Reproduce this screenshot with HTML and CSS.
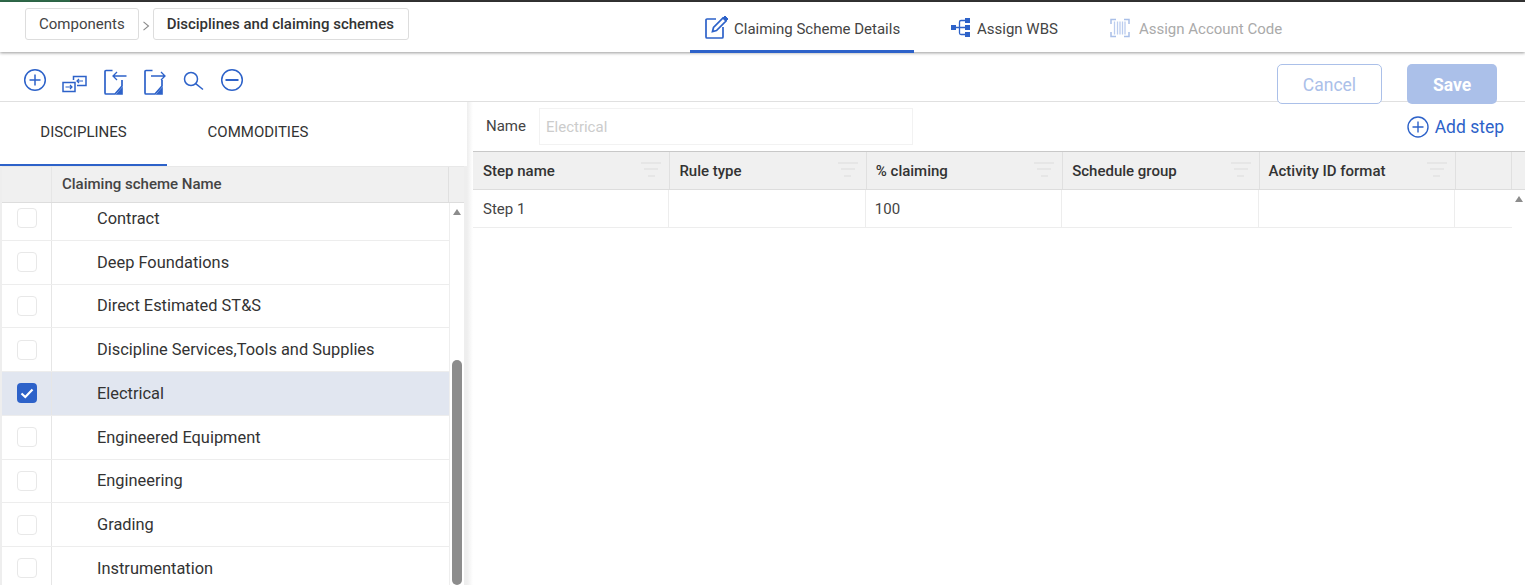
FILE: index.html
```html
<!DOCTYPE html>
<html lang="en">
<head>
    <meta charset="UTF-8">
    <meta name="viewport" content="width=device-width, initial-scale=1.0">
    <title>Disciplines and claiming schemes</title>
    <link rel="stylesheet" href="styles.css">
</head>
<body>
    <div class="top-strip">
        <div class="strip-green"></div>
        <div class="strip-dark"></div>
    </div>

    <header class="header">
        <nav class="breadcrumb">
            <span class="crumb">Components</span>
            <span class="crumb-sep">
                <svg width="8" height="10" viewBox="0 0 8 10"><path d="M1.5 .8 6.500 5 1.500 9.200" fill="none" stroke="#8a8a8a" stroke-width="1.100"/></svg>
            </span>
            <span class="crumb crumb-current">Disciplines and claiming schemes</span>
        </nav>
        <div class="page-tabs">
            <div class="page-tab active">
                <svg class="tab-icon icon-edit" width="24" height="24" viewBox="0 0 24 24" fill="none" stroke="#2d62c9" stroke-width="1.700">
                    <path d="M12 4H3a1 1 0 0 0-1 1v17a1 1 0 0 0 1 1h15a1 1 0 0 0 1-1V12"/>
                    <path d="M8.500 16.500 9.500 12.500 19 3l3 3-9.500 9.500z"/>
                    <path d="M19 3l2-2 3 3-2 2z" fill="#2d62c9" stroke-width="1"/>
                </svg>
                <span>Claiming Scheme Details</span>
            </div>
            <div class="page-tab">
                <svg class="tab-icon icon-wbs" width="20" height="20" viewBox="0 0 20 20" fill="#2d62c9">
                    <rect x="1" y="8" width="5" height="5"/>
                    <rect x="15" y="1" width="5" height="5"/>
                    <rect x="15" y="8" width="5" height="5"/>
                    <rect x="15" y="15" width="5" height="5"/>
                    <path d="M6 10.500h9M15 3.500h-4a1.500 1.500 0 0 0-1.500 1.500v11a1.500 1.500 0 0 0 1.500 1.500h4" fill="none" stroke="#2d62c9" stroke-width="1.300"/>
                </svg>
                <span>Assign WBS</span>
            </div>
            <div class="page-tab disabled">
                <svg class="tab-icon icon-code" width="20" height="20" viewBox="0 0 20 20" fill="none" stroke="#a9bfe8" stroke-width="1.500">
                    <path d="M1 6V1.500H6M14 1.500H19V6M1 14V18.500H6M14 18.500H19V14"/>
                    <path d="M4.500 3.500v13M7.500 3.500v13M10 3.500v13M12.500 3.500v13M15 3.500v13" stroke="#bccdee" stroke-width="1.300"/>
                </svg>
                <span>Assign Account Code</span>
            </div>
        </div>
    </header>

    <div class="toolbar">
        <div class="tool-icons">
            <svg width="24" height="24" viewBox="0 0 24 24" fill="none" stroke="#2d62c9" stroke-width="1.500">
                <circle cx="12" cy="12" r="10.300"/>
                <path d="M12 6.500v11M6.500 12h11"/>
            </svg>
            <svg class="tool-swap" width="26" height="24" viewBox="0 0 26 24" fill="none" stroke="#2d62c9" stroke-width="1.500">
                <rect x="2" y="12.500" width="12" height="9"/>
                <path d="M12.500 10V6.500H25V15.500H16"/>
                <path d="M4.500 17H11M9 15l2 2-2 2M22 11H16M18 9l-2 2 2 2" stroke-width="1.200"/>
            </svg>
            <svg class="tool-doc" width="24" height="26" viewBox="0 0 24 26" fill="none" stroke="#2d62c9" stroke-width="1.700">
                <path d="M9.500 1.500H3a1 1 0 0 0-1 1V24a1 1 0 0 0 1 1h9l7-8V11"/>
                <path d="M19.800 17.500V25.800H12.500z" fill="#2d62c9" stroke="none"/>
                <path d="M23.500 7H10M14 3 10 7l4 4" stroke-width="1.300"/>
            </svg>
            <svg class="tool-doc" width="24" height="26" viewBox="0 0 24 26" fill="none" stroke="#2d62c9" stroke-width="1.700">
                <path d="M9.500 1.500H3a1 1 0 0 0-1 1V24a1 1 0 0 0 1 1h9l7-8V11"/>
                <path d="M19.800 17.500V25.800H12.500z" fill="#2d62c9" stroke="none"/>
                <path d="M8 7H22M18 3l4 4-4 4" stroke-width="1.300"/>
            </svg>
            <svg class="tool-search" width="22" height="22" viewBox="0 0 22 22" fill="none" stroke="#2d62c9" stroke-width="1.500">
                <circle cx="8" cy="9" r="6.500"/>
                <path d="M12.700 13.700 20 19.500"/>
            </svg>
            <svg class="tool-minus" width="24" height="24" viewBox="0 0 24 24" fill="none" stroke="#2d62c9" stroke-width="1.500">
                <circle cx="12" cy="12" r="10.300"/>
                <path d="M5.500 12h13" stroke-width="2"/>
            </svg>
        </div>
        <div class="actions">
            <button class="btn btn-cancel">Cancel</button>
            <button class="btn btn-save">Save</button>
        </div>
    </div>

    <main class="content">
        <section class="left-panel">
            <div class="side-tabs">
                <div class="side-tab active">DISCIPLINES</div>
                <div class="side-tab">COMMODITIES</div>
            </div>
            <div class="scheme-grid">
                <div class="scheme-head">
                    <div class="cell-check"></div>
                    <div class="cell-name">Claiming scheme Name</div>
                    <div class="cell-end"></div>
                </div>
                <div class="scheme-body">
                    <div class="scheme-rows">
                        <div class="scheme-row"><div class="cell-check"><span class="check"></span></div><div class="cell-name">Contract</div></div>
                        <div class="scheme-row"><div class="cell-check"><span class="check"></span></div><div class="cell-name">Deep Foundations</div></div>
                        <div class="scheme-row"><div class="cell-check"><span class="check"></span></div><div class="cell-name">Direct Estimated ST&amp;S</div></div>
                        <div class="scheme-row"><div class="cell-check"><span class="check"></span></div><div class="cell-name">Discipline Services,Tools and Supplies</div></div>
                        <div class="scheme-row selected">
                            <div class="cell-check">
                                <span class="check checked">
                                    <svg width="20" height="20" viewBox="0 0 20 20"><path d="M4.500 10.500 8.300 14 15.500 6.500" fill="none" stroke="#fff" stroke-width="2.200"/></svg>
                                </span>
                            </div>
                            <div class="cell-name">Electrical</div>
                        </div>
                        <div class="scheme-row"><div class="cell-check"><span class="check"></span></div><div class="cell-name">Engineered Equipment</div></div>
                        <div class="scheme-row"><div class="cell-check"><span class="check"></span></div><div class="cell-name">Engineering</div></div>
                        <div class="scheme-row"><div class="cell-check"><span class="check"></span></div><div class="cell-name">Grading</div></div>
                        <div class="scheme-row"><div class="cell-check"><span class="check"></span></div><div class="cell-name">Instrumentation</div></div>
                    </div>
                    <div class="scroll-track">
                        <span class="scroll-arrow"></span>
                        <span class="scroll-thumb"></span>
                    </div>
                </div>
            </div>
        </section>

        <div class="panel-divider"></div>

        <section class="right-panel">
            <div class="name-row">
                <label class="name-label">Name</label>
                <input class="name-input" placeholder="Electrical" disabled>
                <div class="add-step">
                    <svg width="22" height="22" viewBox="0 0 22 22" fill="none" stroke="#2d62c9" stroke-width="1.400">
                        <circle cx="11" cy="11" r="10"/>
                        <path d="M11 5.500v11M5.500 11h11"/>
                    </svg>
                    <span>Add step</span>
                </div>
            </div>
            <div class="steps-grid">
                <div class="steps-table">
                    <div class="steps-head">
                        <div class="step-col">Step name<span class="filter"><i></i><i></i><i></i></span></div>
                        <div class="step-col">Rule type<span class="filter"><i></i><i></i><i></i></span></div>
                        <div class="step-col">% claiming<span class="filter"><i></i><i></i><i></i></span></div>
                        <div class="step-col">Schedule group<span class="filter"><i></i><i></i><i></i></span></div>
                        <div class="step-col">Activity ID format<span class="filter"><i></i><i></i><i></i></span></div>
                        <div class="step-col step-last"></div>
                    </div>
                    <div class="steps-row">
                        <div class="step-cell">Step 1</div>
                        <div class="step-cell"></div>
                        <div class="step-cell">100</div>
                        <div class="step-cell"></div>
                        <div class="step-cell"></div>
                        <div class="step-cell step-last"></div>
                    </div>
                </div>
                <div class="steps-scroll">
                    <div class="steps-scroll-head"></div>
                    <span class="scroll-arrow"></span>
                </div>
            </div>
        </section>
    </main>
</body>
</html>
```

FILE: styles.css
```css
* {
    box-sizing: border-box;
}
html, body {
    height: 100%;
}
body {
    margin: 0;
    height: 585px;
    overflow: hidden;
    background: #fff;
    color: #333;
    font-family: Roboto, "Liberation Sans", sans-serif;
    font-size: 15px;
    display: flex;
    flex-direction: column;
}

.top-strip {
    height: 2px;
    display: flex;
    background: #333;
}
.strip-green {
    width: 70px;
    background: #2f6b4a;
}
.strip-dark {
    flex: 1;
}

/* header */
.header {
    height: 50px;
    display: flex;
    padding-left: 25px;
    background: #fff;
    box-shadow: 0 1px 3px rgba(0, 0, 0, 0.4);
    position: relative;
    z-index: 2;
}
.breadcrumb {
    display: flex;
    align-items: flex-start;
    padding-top: 6px;
    width: 665px;
}
.crumb {
    height: 32px;
    line-height: 31px;
    padding: 0 13px;
    border: 1px solid #ddd;
    border-radius: 3px;
    color: #444;
}
.crumb-current {
    font-weight: 500;
    color: #333;
    padding-right: 14px;
}
.crumb-sep {
    width: 14px;
    padding: 13px 0 0 3px;
}
.crumb-sep svg {
    display: block;
}
.page-tabs {
    display: flex;
}
.page-tab {
    height: 51px;
    display: flex;
    align-items: center;
    gap: 7px;
    padding: 3px 13px 0 14px;
    color: #444;
    white-space: nowrap;
}
.page-tab.active {
    border-bottom: 3px solid #2d62c9;
    padding-top: 6px;
    width: 224px;
    gap: 6px;
}
.page-tab:nth-child(2) {
    margin-left: 22px;
}
.page-tab:nth-child(3) {
    margin-left: 25px;
    gap: 9px;
}
.page-tab.disabled {
    color: #aaa;
}
.tab-icon {
    flex: none;
}
.icon-edit {
    margin-top: -4px;
}
.icon-wbs {
    margin-top: -4px;
}
.icon-code {
    margin-top: -2px;
}

/* toolbar */
.toolbar {
    height: 50px;
    display: flex;
    justify-content: space-between;
    padding: 12px 28px 0 23px;
    border-bottom: 1px solid #e0e0e0;
}
.tool-icons {
    display: flex;
    align-items: flex-start;
    gap: 16px;
    padding-top: 4px;
}
.tool-swap {
    margin: 2px 0 0 -2px;
}
.tool-doc {
    margin-top: 1px;
}
.tool-search {
    margin-top: 2px;
}
.tool-minus {
    margin-left: -1px;
}
.actions {
    display: flex;
    gap: 25px;
    align-items: flex-start;
}
.btn {
    height: 40px;
    padding: 2px 0 0;
    border-radius: 5px;
    font-family: inherit;
    font-size: 17.500px;
}
.btn-cancel {
    width: 105px;
    background: #fff;
    border: 1px solid #abc0e9;
    color: #abc0e9;
}
.btn-save {
    width: 90px;
    background: #abc0e9;
    border: 0;
    color: #fff;
    font-weight: 700;
}

/* main area */
.content {
    flex: 1;
    display: flex;
    min-height: 0;
}
.left-panel {
    width: 467px;
    display: flex;
    flex-direction: column;
}
.panel-divider {
    width: 6px;
    background: linear-gradient(to right, #eee, #fff);
}
.right-panel {
    flex: 1;
    display: flex;
    flex-direction: column;
    min-width: 0;
}

.side-tabs {
    height: 64px;
    display: flex;
    flex: none;
}
.side-tab {
    width: 167px;
    padding-top: 21px;
    text-align: center;
    color: #333;
}
.side-tab.active {
    border-bottom: 2px solid #2d62c9;
}
.side-tab:nth-child(2) {
    width: 182px;
}

.scheme-grid {
    flex: 1;
    min-height: 0;
    display: flex;
    flex-direction: column;
    padding: 0 3px 0 2px;
    background: #eee;
}
.scheme-head {
    height: 37px;
    flex: none;
    display: flex;
    background: #f0f0f0;
    border-top: 1px solid #e8e8e8;
    border-bottom: 1px solid #ddd;
    font-weight: 500;
    color: #444;
}
.cell-check {
    width: 50px;
    flex: none;
    display: flex;
    align-items: center;
    justify-content: center;
    border-right: 1px solid #e6e6e6;
}
.cell-name {
    flex: 1;
    display: flex;
    align-items: center;
}
.scheme-head .cell-name {
    padding: 0 0 2px 10px;
    border-right: 1px solid #e0e0e0;
}
.cell-end {
    width: 15px;
    flex: none;
}
.scheme-body {
    flex: 1;
    min-height: 0;
    display: flex;
    overflow: hidden;
    background: #fff;
}
.scheme-rows {
    flex: 1;
    margin-top: -6px;
}
.scheme-row {
    height: 43.750px;
    display: flex;
    border-bottom: 1px solid #ededed;
    font-size: 16.400px;
}
.scheme-row .cell-name {
    padding-left: 45px;
}
.scheme-row.selected {
    background: #e1e6f0;
}
.check {
    width: 20px;
    height: 20px;
    background: #fff;
    border: 1px solid #e8e8e8;
    border-radius: 4px;
}
.check svg {
    display: block;
}
.check.checked {
    background: #2d62c9;
    border: 0;
}
.scroll-track {
    width: 15px;
    flex: none;
    display: flex;
    flex-direction: column;
    align-items: center;
    border-left: 1px solid #eee;
    padding: 6px 2px 0 1px;
}
.scroll-arrow {
    display: block;
    flex: none;
    width: 0;
    height: 0;
    border-left: 4.500px solid transparent;
    border-right: 4.500px solid transparent;
    border-bottom: 6px solid #8c8c8c;
}
.scroll-thumb {
    display: block;
    width: 10px;
    height: 240px;
    margin-top: 145px;
    background: #8c8c8c;
    border-radius: 5px;
}

/* right side */
.name-row {
    height: 49px;
    flex: none;
    display: flex;
    align-items: center;
    padding: 0 21px 0 13px;
}
.name-label {
    width: 53px;
    padding-bottom: 2px;
    color: #444;
}
.name-input {
    width: 374px;
    height: 37px;
    padding: 0 6px;
    border: 1px solid #f2f2f2;
    background: #fff;
    font-family: inherit;
    font-size: 15px;
}
.name-input::placeholder {
    color: #ccc;
    opacity: 1;
}
.add-step {
    margin-left: auto;
    display: flex;
    align-items: center;
    gap: 6px;
    font-size: 17.500px;
    color: #2d62c9;
}
.steps-grid {
    flex: 1;
    display: flex;
    border-top: 1px solid #c8c8c8;
    min-height: 0;
}
.steps-table {
    width: 1039px;
    flex: none;
}
.steps-head {
    height: 38px;
    display: flex;
    background: #f0f0f0;
    border-bottom: 1px solid #ddd;
    font-weight: 500;
    color: #333;
}
.steps-row {
    height: 38px;
    display: flex;
    border-bottom: 1px solid #ededed;
    color: #444;
}
.step-col {
    width: 196.400px;
    flex: none;
    display: flex;
    align-items: center;
    justify-content: space-between;
    padding: 0 8px 0 9px;
    border-right: 1px solid #e0e0e0;
}
.step-col:first-child {
    width: 197.400px;
    padding-left: 10px;
}
.step-cell {
    width: 196.400px;
    flex: none;
    display: flex;
    align-items: center;
    padding: 1px 9px 0;
    border-right: 1px solid #ededed;
}
.step-cell:first-child {
    padding-left: 10px;
}
.step-col.step-last, .step-cell.step-last {
    width: 56px;
}
.step-cell.step-last {
    border-right: 0;
}
.filter {
    width: 20px;
    display: flex;
    flex-direction: column;
    align-items: center;
    gap: 4.500px;
    margin-top: -3px;
}
.filter i {
    display: block;
    height: 2px;
    background: #e6e6e6;
    width: 20px;
}
.filter i:nth-child(2) {
    width: 14px;
}
.filter i:nth-child(3) {
    width: 7px;
}
.steps-scroll {
    flex: 1;
    display: flex;
    flex-direction: column;
    align-items: center;
}
.steps-scroll-head {
    width: 100%;
    height: 38px;
    background: #f0f0f0;
    border-bottom: 1px solid #ddd;
    margin-bottom: 6px;
}
```
